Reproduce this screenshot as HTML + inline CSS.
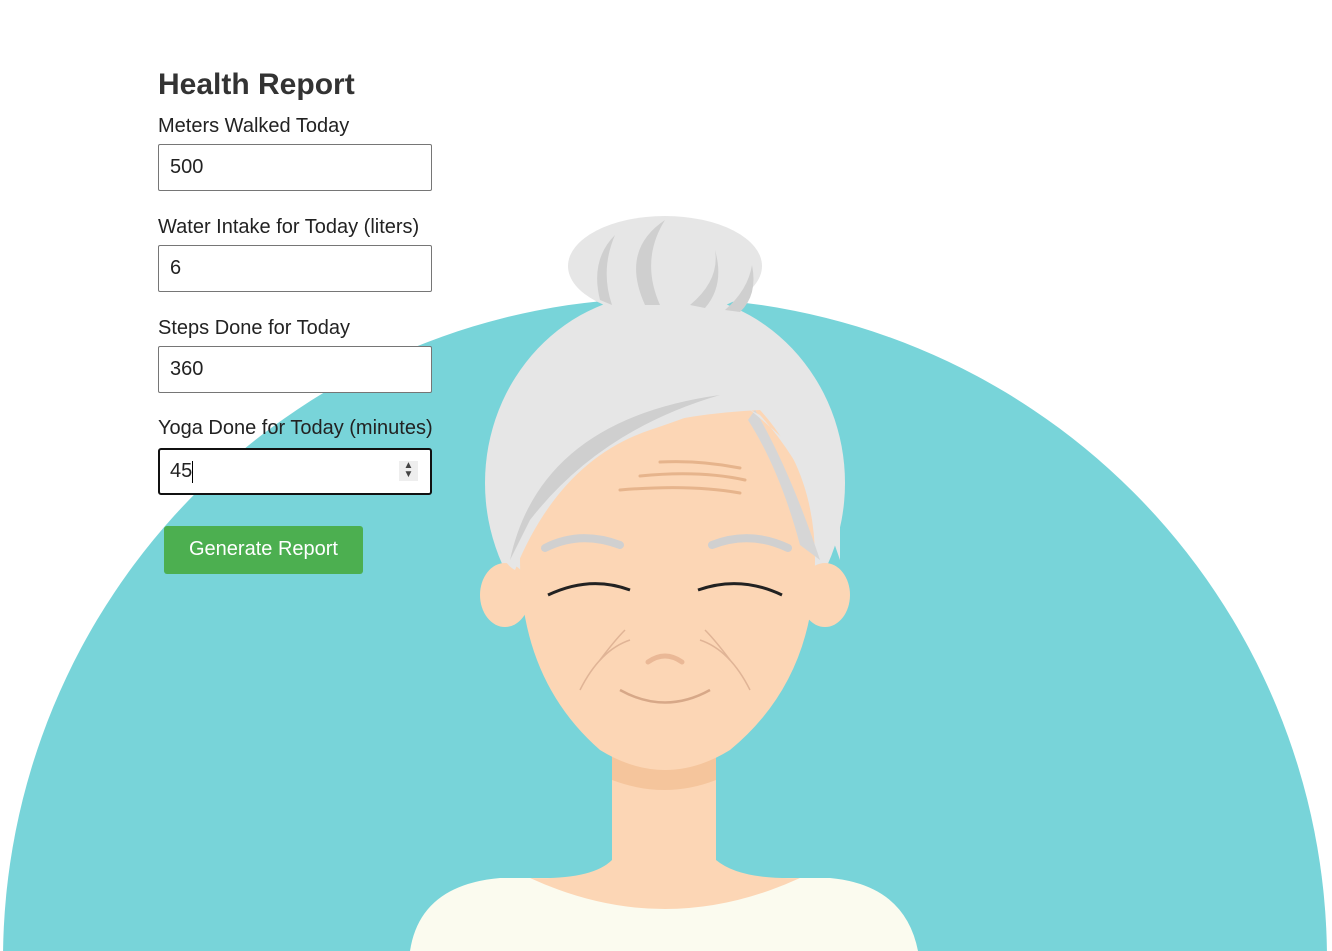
<!DOCTYPE html>
<html style="overflow:hidden"><head><meta charset="utf-8"><style>
html,body{margin:0;width:1332px;height:951px;overflow:hidden}
body{background:#fff;position:relative;font-family:"Liberation Sans",Arial,sans-serif;color:#222}
svg{position:absolute;left:0;top:0}
.form{position:absolute;left:158px;top:0}
h2{position:absolute;top:68px;left:0;margin:0;font-size:30px;font-weight:bold;color:#333;white-space:nowrap}
.lbl{position:absolute;left:0;font-size:20px;white-space:nowrap;color:#222}
.inp{position:absolute;left:0;width:274px;height:47px;border:1px solid #767676;border-radius:2px;background:#fff;box-sizing:border-box;font-size:20px;padding-left:11px;line-height:45px}
.foc{border:2px solid #111;border-radius:3px;padding-left:10px;line-height:43px}
.btn{position:absolute;left:6px;top:526px;width:199px;height:48px;background:#4caf50;color:#fff;border-radius:3px;font-size:20px;text-align:center;line-height:47px}
</style></head><body>
<svg width="1332" height="951" viewBox="0 0 1332 951">
<circle cx="665" cy="960" r="662" fill="#78d4d9"/>
<path d="M410 951 Q420 885 500 878 L830 878 Q905 885 918 951Z" fill="#fbfbef"/>
<path d="M612 700 L716 700 L716 860 Q740 880 800 878 Q665 940 530 878 Q592 880 612 860Z" fill="#fcd6b5"/>
<path d="M612 740 L716 740 L716 780 Q665 800 612 780Z" fill="#f5c59c"/>
<ellipse cx="665" cy="483" rx="180" ry="190" fill="#e6e6e6"/>
<ellipse cx="665" cy="266" rx="97" ry="50" fill="#e6e6e6"/>
<path d="M600 300 Q590 260 615 235 Q600 270 612 305Z" fill="#cfcfcf"/>
<path d="M645 305 Q620 250 665 220 Q640 260 660 305Z" fill="#cfcfcf"/>
<path d="M690 305 Q720 280 715 250 Q725 285 705 308Z" fill="#cfcfcf"/>
<path d="M725 310 Q748 290 752 265 Q758 295 740 312Z" fill="#cfcfcf"/>
<ellipse cx="505" cy="595" rx="25" ry="32" fill="#fcd6b5"/>
<ellipse cx="825" cy="595" rx="25" ry="32" fill="#fcd6b5"/>
<path d="M520 520 Q560 420 760 410 Q815 470 815 560 Q815 680 730 750 Q665 790 600 750 Q520 680 520 560Z" fill="#fcd6b5"/>
<path d="M490 500 Q500 380 600 350 Q700 330 760 380 Q740 400 650 430 Q560 460 515 570 Q495 560 490 500Z" fill="#e6e6e6"/>
<path d="M510 560 Q540 420 720 395 Q600 430 530 520Z" fill="#cfcfcf"/>
<path d="M755 410 Q790 470 820 560 L800 545 Q780 470 748 420Z" fill="#d6d6d6"/>
<path d="M750 410 Q800 450 840 500 L840 560 Q810 470 760 415Z" fill="#e6e6e6"/>
<g stroke="#e6b48c" stroke-width="3" fill="none" stroke-linecap="round">
<path d="M660 462 Q700 460 740 468"/><path d="M640 476 Q700 470 745 480"/><path d="M620 490 Q690 484 740 493"/>
</g>
<path d="M545 548 Q580 530 620 545" stroke="#d0d0d0" stroke-width="8" fill="none" stroke-linecap="round"/>
<path d="M712 545 Q750 530 788 548" stroke="#d0d0d0" stroke-width="8" fill="none" stroke-linecap="round"/>
<path d="M548 595 Q590 575 630 590" stroke="#222" stroke-width="3" fill="none"/>
<path d="M698 590 Q740 575 782 595" stroke="#222" stroke-width="3" fill="none"/>
<path d="M648 662 Q665 650 682 662" stroke="#eab896" stroke-width="5" fill="none" stroke-linecap="round"/>
<path d="M620 690 Q665 715 710 690" stroke="#d7a888" stroke-width="2.5" fill="none"/>
<g stroke="#e0b496" stroke-width="1.5" fill="none">
<path d="M580 690 Q600 650 630 640"/><path d="M750 690 Q730 650 700 640"/><path d="M600 660 Q615 640 625 630"/><path d="M730 660 Q715 640 705 630"/>
</g>
</svg>
<div class="form">
<h2>Health Report</h2>
<div class="lbl" style="top:115px">Meters Walked Today</div>
<div class="inp" style="top:144px">500</div>
<div class="lbl" style="top:216px">Water Intake for Today (liters)</div>
<div class="inp" style="top:245px">6</div>
<div class="lbl" style="top:417px">Yoga Done for Today (minutes)</div>
<div class="lbl" style="top:317px">Steps Done for Today</div>
<div class="inp" style="top:346px">360</div>
<div class="inp foc" style="top:448px">45<span style="display:inline-block;width:1px;height:22px;background:#000;vertical-align:middle"></span>
<span style="position:absolute;right:12px;top:11px;width:19px;height:20px;background:#eee;font-size:10px;line-height:9px;text-align:center;color:#444">▲<br>▼</span></div>
<div class="btn">Generate Report</div>
</div>
</body></html>
